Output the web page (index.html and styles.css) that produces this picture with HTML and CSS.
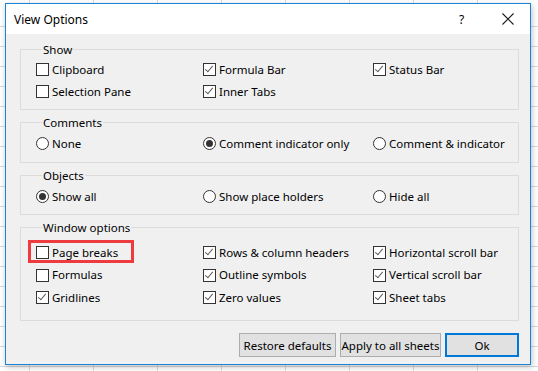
FILE: index.html
```html
<!DOCTYPE html>
<html lang="en">
<head>
  <meta charset="UTF-8" />
  <title>View Options</title>
  <link rel="stylesheet" href="styles.css">
</head>
<body>

<div class="dialog">
  <div class="titlebar">
    <span class="title">View Options</span>
    <span class="help">?</span>
    <svg class="close" width="12" height="12" viewBox="0 0 12 12">
      <path d="M0.5 0.5 L11.5 11.5 M11.5 0.5 L0.5 11.5" stroke="#1a1a1a" stroke-width="1.1" fill="none"/>
    </svg>
  </div>

  <div class="content">
    <fieldset class="group show">
      <legend>Show</legend>
      <div class="grid">
        <label class="opt"><span class="box"></span>Clipboard</label>
        <label class="opt"><span class="box checked"></span>Formula Bar</label>
        <label class="opt"><span class="box checked"></span>Status Bar</label>
        <label class="opt"><span class="box"></span>Selection Pane</label>
        <label class="opt"><span class="box checked"></span>Inner Tabs</label>
      </div>
    </fieldset>

    <fieldset class="group comments">
      <legend>Comments</legend>
      <div class="grid">
        <label class="opt"><span class="radio"></span>None</label>
        <label class="opt"><span class="radio on"></span>Comment indicator only</label>
        <label class="opt"><span class="radio"></span>Comment &amp; indicator</label>
      </div>
    </fieldset>

    <fieldset class="group">
      <legend>Objects</legend>
      <div class="grid">
        <label class="opt"><span class="radio on"></span>Show all</label>
        <label class="opt"><span class="radio"></span>Show place holders</label>
        <label class="opt"><span class="radio"></span>Hide all</label>
      </div>
    </fieldset>

    <fieldset class="group window">
      <legend>Window options</legend>
      <div class="grid">
        <label class="opt highlight"><span class="box"></span>Page breaks</label>
        <label class="opt"><span class="box checked"></span>Rows &amp; column headers</label>
        <label class="opt"><span class="box checked"></span>Horizontal scroll bar</label>
        <label class="opt"><span class="box"></span>Formulas</label>
        <label class="opt"><span class="box checked"></span>Outline symbols</label>
        <label class="opt"><span class="box checked"></span>Vertical scroll bar</label>
        <label class="opt"><span class="box checked"></span>Gridlines</label>
        <label class="opt"><span class="box checked"></span>Zero values</label>
        <label class="opt"><span class="box checked"></span>Sheet tabs</label>
      </div>
    </fieldset>

    <div class="buttons">
      <button class="btn restore">Restore defaults</button>
      <button class="btn apply">Apply to all sheets</button>
      <button class="btn ok">Ok</button>
    </div>
  </div>
</div>

</body>
</html>
```

FILE: styles.css
```css
html, body {
  height: 100%;
  margin: 0;
}

body {
  font-family: "Noto Sans", "Liberation Sans", sans-serif;
  font-size: 11.5px;
  color: #000;
  background-color: #fff;
  background-image:
    repeating-linear-gradient(to bottom, transparent 0 19px, #d9d9d9 19px 20px),
    repeating-linear-gradient(to right, transparent 0 63px, #d9d9d9 63px 64px);
  background-position: 0 7px, -34px 0;
  overflow: hidden;
}

.dialog {
  margin: 3px 0 0 5px;
  width: 526px;
  height: 362px;
  box-sizing: border-box;
  border: 1px solid #1883d7;
  background: #f0f0f0;
  box-shadow: 1px 2px 6px rgb(0 0 0 / 0.25);
}

.titlebar {
  height: 30px;
  background: #fff;
  display: flex;
  align-items: center;
  padding-left: 8px;
}

.title {
  flex: 1;
  font-size: 12px;
}

.help {
  width: 12px;
  margin-right: 31px;
  font-size: 12px;
}

.close {
  margin-right: 16px;
}

.content {
  padding: 8px 11px 0 14px;
}

/* group boxes */
.group {
  margin: 0 0 5px 0;
  padding: 2px 0 7px 15px;
  border: 1px solid #dcdcdc;
}

.group.show {
  padding-top: 1px;
}

.group.comments {
  padding-bottom: 8px;
}

.group.window {
  margin-bottom: 0;
  padding-top: 6px;
  padding-bottom: 11.5px;
}

legend {
  padding: 0 1px;
  margin-left: 6px;
  line-height: 15px;
}

.grid {
  display: grid;
  grid-template-columns: 167px 170px auto;
}

.window .grid {
  grid-auto-rows: 22.5px;
}

.opt {
  display: flex;
  align-items: center;
  height: 22px;
  position: relative;
  white-space: nowrap;
}

.box, .radio {
  width: 13px;
  height: 13px;
  box-sizing: border-box;
  border: 1px solid #333;
  background: #fff;
  margin: 1px 3px 0 0;
  flex: none;
  position: relative;
}

.box.checked::after {
  content: "";
  position: absolute;
  left: 3px;
  top: 0px;
  width: 3px;
  height: 7px;
  border: solid #5c5c5c;
  border-width: 0 1.3px 1.3px 0;
  transform: rotate(40deg);
}

.radio {
  border-radius: 50%;
}

.radio.on::after {
  content: "";
  position: absolute;
  left: 2px;
  top: 2px;
  width: 7px;
  height: 7px;
  border-radius: 50%;
  background: #333;
}

.highlight::before {
  content: "";
  position: absolute;
  left: -8px;
  top: -1px;
  width: 106px;
  height: 23px;
  box-sizing: border-box;
  border: 3px solid #ee3b3f;
}

.buttons {
  display: flex;
  justify-content: flex-end;
  gap: 4px;
  margin-top: 12px;
}

.btn {
  height: 24px;
  font-family: inherit;
  font-size: 11.5px;
  color: #000;
  background: #e1e1e1;
  border: 1px solid #adadad;
  padding: 0;
  white-space: nowrap;
}

.restore {
  width: 97px;
}

.apply {
  width: 101px;
}

.ok {
  width: 74px;
  border: 2px solid #0078d7;
}
```
